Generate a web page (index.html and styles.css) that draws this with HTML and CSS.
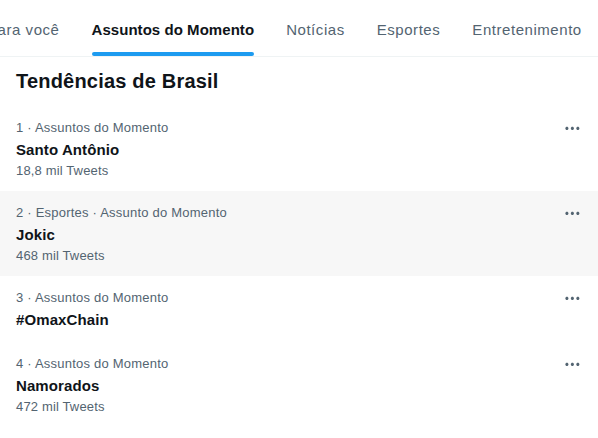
FILE: index.html
```html
<!DOCTYPE html>
<html lang="pt-BR">
<head>
<meta charset="utf-8">
<link rel="stylesheet" href="styles.css">
</head>
<body>
<div class="page">
  <nav class="tabs">
    <div class="tab"><span class="tab-label">Para você</span></div>
    <div class="tab active"><span class="tab-label">Assuntos do Momento<span class="indicator"></span></span></div>
    <div class="tab"><span class="tab-label">Notícias</span></div>
    <div class="tab"><span class="tab-label">Esportes</span></div>
    <div class="tab"><span class="tab-label">Entretenimento</span></div>
  </nav>
  <h2 class="heading">Tendências de Brasil</h2>
  <div class="trend">
    <div class="trend-body">
      <div class="meta">1 · Assuntos do Momento</div>
      <div class="title">Santo Antônio</div>
      <div class="count">18,8 mil Tweets</div>
    </div>
    <svg class="more" viewBox="0 0 24 24"><path d="M3 12c0-1.1.9-2 2-2s2 .9 2 2-.9 2-2 2-2-.9-2-2zm9 2c1.1 0 2-.9 2-2s-.9-2-2-2-2 .9-2 2 .9 2 2 2zm7 0c1.1 0 2-.9 2-2s-.9-2-2-2-2 .9-2 2 .9 2 2 2z"/></svg>
  </div>
  <div class="trend hover">
    <div class="trend-body">
      <div class="meta">2 · Esportes · Assunto do Momento</div>
      <div class="title">Jokic</div>
      <div class="count">468 mil Tweets</div>
    </div>
    <svg class="more" viewBox="0 0 24 24"><path d="M3 12c0-1.1.9-2 2-2s2 .9 2 2-.9 2-2 2-2-.9-2-2zm9 2c1.1 0 2-.9 2-2s-.9-2-2-2-2 .9-2 2 .9 2 2 2zm7 0c1.1 0 2-.9 2-2s-.9-2-2-2-2 .9-2 2 .9 2 2 2z"/></svg>
  </div>
  <div class="trend">
    <div class="trend-body">
      <div class="meta">3 · Assuntos do Momento</div>
      <div class="title">#OmaxChain</div>
    </div>
    <svg class="more" viewBox="0 0 24 24"><path d="M3 12c0-1.1.9-2 2-2s2 .9 2 2-.9 2-2 2-2-.9-2-2zm9 2c1.1 0 2-.9 2-2s-.9-2-2-2-2 .9-2 2 .9 2 2 2zm7 0c1.1 0 2-.9 2-2s-.9-2-2-2-2 .9-2 2 .9 2 2 2z"/></svg>
  </div>
  <div class="trend">
    <div class="trend-body">
      <div class="meta">4 · Assuntos do Momento</div>
      <div class="title">Namorados</div>
      <div class="count">472 mil Tweets</div>
    </div>
    <svg class="more" viewBox="0 0 24 24"><path d="M3 12c0-1.1.9-2 2-2s2 .9 2 2-.9 2-2 2-2-.9-2-2zm9 2c1.1 0 2-.9 2-2s-.9-2-2-2-2 .9-2 2 .9 2 2 2zm7 0c1.1 0 2-.9 2-2s-.9-2-2-2-2 .9-2 2 .9 2 2 2z"/></svg>
  </div>
</div>
</body>
</html>
```

FILE: styles.css
```css
* { box-sizing: border-box; }
html, body { margin: 0; padding: 0; background: #ffffff; }
body {
  font-family: "Liberation Sans", Arial, sans-serif;
  color: #0f1419;
  overflow: hidden;
}
.page { width: 598px; }
.tabs {
  display: flex;
  height: 57px;
  border-bottom: 1px solid #eff3f4;
  margin-left: -29px;
  white-space: nowrap;
}
.tab {
  flex: none;
  display: flex;
  justify-content: center;
  padding: 0 16px;
  font-size: 15px;
  font-weight: 400;
  letter-spacing: 0.55px;
  color: #536471;
}
.tab-label {
  position: relative;
  display: flex;
  align-items: center;
  height: 56px;
  padding-top: 2px;
}
.tab.active { color: #0f1419; font-weight: 700; letter-spacing: 0.05px; }
.indicator {
  position: absolute;
  left: 0; right: 0; bottom: 0;
  height: 4px;
  border-radius: 9999px;
  background: #1d9bf0;
}
.heading {
  margin: 0;
  padding: 12px 16px 13px;
  font-size: 20px;
  line-height: 24px;
  font-weight: 800;
  letter-spacing: 0.2px;
}
.trend {
  display: flex;
  justify-content: space-between;
  align-items: flex-start;
  padding: 13px 16px 12px;
}
.trend.hover { background: #f7f7f7; }
.trend-body { display: flex; flex-direction: column; }
.meta {
  font-size: 13px;
  line-height: 18px;
  letter-spacing: 0.22px;
  color: #536471;
}
.title {
  padding-top: 3px;
  font-size: 15px;
  line-height: 20px;
  font-weight: 700;
  letter-spacing: 0.1px;
  color: #0f1419;
}
.count {
  margin-top: 3px;
  font-size: 13px;
  line-height: 16px;
  letter-spacing: 0.15px;
  color: #536471;
}
.more {
  width: 18.75px;
  height: 18.75px;
  fill: #536471;
  flex: none;
}
```
